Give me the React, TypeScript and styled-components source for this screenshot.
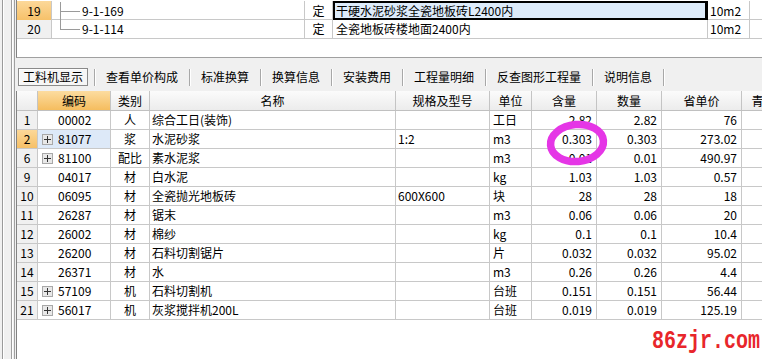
import React from "react";
import styled, { createGlobalStyle } from "styled-components";

const GlobalStyle = createGlobalStyle`
  html, body {
    margin: 0;
    padding: 0;
  }
  body {
    font-family: "Noto Sans CJK SC", "Liberation Sans", sans-serif;
    font-size: 12px;
    color: #000;
    background: #f0f0f0;
  }
`;

const TOP_COLS = "35px 253px 28px 375px 42px 80px";
const GRID_COLS = "21px 73px 39px 246px 94px 42px 65px 65px 80px 68px";

const Screen = styled.div`
  position: relative;
  display: flex;
  width: 762px;
  height: 359px;
  overflow: hidden;
  background: #f0f0f0;
`;

const Rail = styled.div`
  flex: 0 0 16px;
  background: linear-gradient(
    to right,
    #f0f0f0 0 2px,
    #9a9a9a 2px 3px,
    #ffffff 3px 4px,
    #f0f0f0 4px 11px,
    #a0a0a0 11px 12px,
    #ffffff 12px 13px,
    #f0f0f0 13px 14px,
    #a0a0a0 14px 15px,
    #f0f0f0 15px 16px
  );
`;

const Main = styled.div`
  flex: 1;
  min-width: 0;
  display: flex;
  flex-direction: column;
`;

const TopPanel = styled.div`
  flex: 0 0 58px;
  box-sizing: border-box;
  padding-top: 1px;
  background: #fff;
  border-left: 1px solid #828282;
  border-bottom: 1px solid #a0a0a0;
  overflow: hidden;
`;

const TopRow = styled.div`
  display: grid;
  grid-template-columns: ${TOP_COLS};
  height: 19px;
  box-sizing: border-box;
  border-bottom: 1px solid #c8c8c8;
`;

const Cell = styled.div`
  box-sizing: border-box;
  height: 100%;
  border-right: 1px solid #c8c8c8;
  display: flex;
  align-items: center;
  white-space: nowrap;
  overflow: hidden;
  line-height: 1;
`;

const RowNo = styled(Cell)<{ $active?: boolean }>`
  justify-content: center;
  background: ${(p) =>
    p.$active ? "linear-gradient(#fcd899, #f6c067)" : "#f0f0f0"};
`;

const TreeCell = styled(Cell)`
  padding-left: 0;
`;

const TypeCell = styled(Cell)`
  justify-content: center;
`;

const NameCell = styled(Cell)<{ $selected?: boolean }>`
  padding-left: ${(p) => (p.$selected ? "1px" : "3px")};
  background: ${(p) => (p.$selected ? "#ddebfa" : "#fff")};
  border: ${(p) => (p.$selected ? "2px solid #000" : "none")};
  border-right: ${(p) => (p.$selected ? "3px solid #000" : "1px solid #c8c8c8")};
  border-bottom-width: ${(p) => (p.$selected ? "3px" : "0")};
  height: ${(p) => (p.$selected ? "20px" : "100%")};
`;

const UnitCell = styled(Cell)`
  padding-left: 2px;
`;

const TabBar = styled.div`
  flex: 0 0 33px;
  box-sizing: border-box;
  display: flex;
  align-items: flex-start;
  padding: 10px 0 0 1px;
`;

const Tab = styled.div<{ $active?: boolean }>`
  height: 18px;
  box-sizing: border-box;
  padding: 0 4px;
  margin: 0 6px;
  display: flex;
  align-items: center;
  line-height: 1;
  border: 1px solid ${(p) => (p.$active ? "#8a8a8a" : "transparent")};
  box-shadow: ${(p) => (p.$active ? "inset 1px 1px 0 #ffffff" : "none")};
  background: ${(p) => (p.$active ? "#f6f6f6" : "transparent")};
  &:first-child {
    margin-left: 1px;
  }
`;

const TabSep = styled.div`
  width: 1px;
  height: 17px;
  margin-top: 1px;
  background: #a8a8a8;
  box-shadow: 1px 0 0 #ffffff;
`;

const GridPanel = styled.div`
  flex: 1;
  background: #fff;
  border-left: 1px solid #828282;
  overflow: hidden;
`;

const HeaderRow = styled.div`
  display: grid;
  grid-template-columns: ${GRID_COLS};
  height: 20px;
  box-sizing: border-box;
  border-bottom: 1px solid #c0c0c0;
`;

const HeadCell = styled(Cell)<{ $active?: boolean }>`
  justify-content: center;
  border-right-color: #c4c4c4;
  background: ${(p) =>
    p.$active
      ? "linear-gradient(#fcdca0, #f5bd5e)"
      : "linear-gradient(#fbfbfb, #ececec)"};
`;

const DataRow = styled.div`
  display: grid;
  grid-template-columns: ${GRID_COLS};
  height: 19px;
  box-sizing: border-box;
  border-bottom: 1px solid #c8c8c8;
`;

const CodeCell = styled(Cell)<{ $active?: boolean; $expand?: boolean }>`
  padding-left: ${(p) => (p.$expand ? "4px" : "20px")};
  background: ${(p) => (p.$active ? "#dde9f8" : "#fff")};
`;

const Expander = styled.span`
  width: 11px;
  height: 11px;
  box-sizing: border-box;
  border: 1px solid #a8a8a8;
  background: #e8e8e8;
  margin-right: 5px;
  display: flex;
  align-items: center;
  justify-content: center;
`;

const CatCell = styled(Cell)`
  justify-content: center;
`;

const TextCell = styled(Cell)<{ $pad?: number }>`
  padding-left: ${(p) => p.$pad ?? 2}px;
`;

const ValueCell = styled(Cell)`
  justify-content: flex-end;
  padding-right: 4px;
`;

const Ring = styled.svg`
  position: absolute;
  left: 544px;
  top: 119px;
  width: 66px;
  height: 48px;
  pointer-events: none;
`;

const Watermark = styled.div`
  position: absolute;
  right: 2px;
  bottom: 5px;
  font-family: "Liberation Mono", "DejaVu Sans Mono", monospace;
  font-weight: bold;
  font-size: 20px;
  line-height: 1;
  color: #e8262b;
  transform: scaleY(1.25);
  transform-origin: bottom right;
`;

function TreeGlyph({ last }: { last?: boolean }) {
  return (
    <svg width="30" height="19" viewBox="0 0 30 19" style={{ flex: "none" }}>
      <line x1="8.5" y1="0" x2="8.5" y2={last ? 10 : 19} stroke="#9a9a9a" />
      <line x1="8.5" y1="9.5" x2="28" y2="9.5" stroke="#9a9a9a" />
    </svg>
  );
}

function PlusIcon() {
  return (
    <svg width="7" height="7" viewBox="0 0 7 7">
      <path d="M0 3.5H7M3.5 0V7" stroke="#333" strokeWidth="1" />
    </svg>
  );
}

const tabs = [
  "工料机显示",
  "查看单价构成",
  "标准换算",
  "换算信息",
  "安装费用",
  "工程量明细",
  "反查图形工程量",
  "说明信息",
];

interface Item {
  no: string;
  code: string;
  expand?: boolean;
  cat: string;
  name: string;
  spec: string;
  unit: string;
  qty: string;
  amount: string;
  price: string;
  active?: boolean;
}

const items: Item[] = [
  { no: "1", code: "00002", cat: "人", name: "综合工日(装饰)", spec: "", unit: "工日", qty: "2.82", amount: "2.82", price: "76" },
  { no: "2", code: "81077", expand: true, cat: "浆", name: "水泥砂浆", spec: "1:2", unit: "m3", qty: "0.303", amount: "0.303", price: "273.02", active: true },
  { no: "6", code: "81100", expand: true, cat: "配比", name: "素水泥浆", spec: "", unit: "m3", qty: "0.01", amount: "0.01", price: "490.97" },
  { no: "9", code: "04017", cat: "材", name: "白水泥", spec: "", unit: "kg", qty: "1.03", amount: "1.03", price: "0.57" },
  { no: "10", code: "06095", cat: "材", name: "全瓷抛光地板砖", spec: "600X600", unit: "块", qty: "28", amount: "28", price: "18" },
  { no: "11", code: "26287", cat: "材", name: "锯末", spec: "", unit: "m3", qty: "0.06", amount: "0.06", price: "20" },
  { no: "12", code: "26002", cat: "材", name: "棉纱", spec: "", unit: "kg", qty: "0.1", amount: "0.1", price: "10.4" },
  { no: "13", code: "26200", cat: "材", name: "石料切割锯片", spec: "", unit: "片", qty: "0.032", amount: "0.032", price: "95.02" },
  { no: "14", code: "26371", cat: "材", name: "水", spec: "", unit: "m3", qty: "0.26", amount: "0.26", price: "4.4" },
  { no: "15", code: "57109", expand: true, cat: "机", name: "石料切割机", spec: "", unit: "台班", qty: "0.151", amount: "0.151", price: "56.44" },
  { no: "21", code: "56017", expand: true, cat: "机", name: "灰浆搅拌机200L", spec: "", unit: "台班", qty: "0.019", amount: "0.019", price: "125.19" },
];

export default function App() {
  return (
    <>
      <GlobalStyle />
      <Screen>
        <Rail />
        <Main>
          <TopPanel>
            <TopRow>
              <RowNo $active>19</RowNo>
              <TreeCell>
                <TreeGlyph />
                9-1-169
              </TreeCell>
              <TypeCell>定</TypeCell>
              <NameCell $selected>干硬水泥砂浆全瓷地板砖L2400内</NameCell>
              <UnitCell>10m2</UnitCell>
              <Cell />
            </TopRow>
            <TopRow>
              <RowNo>20</RowNo>
              <TreeCell>
                <TreeGlyph last />
                9-1-114
              </TreeCell>
              <TypeCell>定</TypeCell>
              <NameCell>全瓷地板砖楼地面2400内</NameCell>
              <UnitCell>10m2</UnitCell>
              <Cell />
            </TopRow>
          </TopPanel>

          <TabBar>
            {tabs.map((t, i) => (
              <React.Fragment key={t}>
                <Tab $active={i === 0}>{t}</Tab>
                <TabSep />
              </React.Fragment>
            ))}
          </TabBar>

          <GridPanel>
            <HeaderRow>
              <HeadCell />
              <HeadCell $active>编码</HeadCell>
              <HeadCell>类别</HeadCell>
              <HeadCell>名称</HeadCell>
              <HeadCell>规格及型号</HeadCell>
              <HeadCell>单位</HeadCell>
              <HeadCell>含量</HeadCell>
              <HeadCell>数量</HeadCell>
              <HeadCell>省单价</HeadCell>
              <HeadCell>青海单价</HeadCell>
            </HeaderRow>
            {items.map((it) => (
              <DataRow key={it.no}>
                <RowNo $active={it.active}>{it.no}</RowNo>
                <CodeCell $active={it.active} $expand={it.expand}>
                  {it.expand && (
                    <Expander>
                      <PlusIcon />
                    </Expander>
                  )}
                  {it.code}
                </CodeCell>
                <CatCell>{it.cat}</CatCell>
                <TextCell>{it.name}</TextCell>
                <TextCell>{it.spec}</TextCell>
                <TextCell $pad={3}>{it.unit}</TextCell>
                <ValueCell>{it.qty}</ValueCell>
                <ValueCell>{it.amount}</ValueCell>
                <ValueCell>{it.price}</ValueCell>
                <Cell />
              </DataRow>
            ))}
          </GridPanel>
        </Main>

        <Ring viewBox="0 0 66 48">
          <ellipse
            cx="33"
            cy="24"
            rx="26.5"
            ry="18.5"
            fill="none"
            stroke="#e536e6"
            strokeWidth="7.5"
            transform="rotate(-5 33 24)"
          />
        </Ring>
        <Watermark>86zjr.com</Watermark>
      </Screen>
    </>
  );
}
